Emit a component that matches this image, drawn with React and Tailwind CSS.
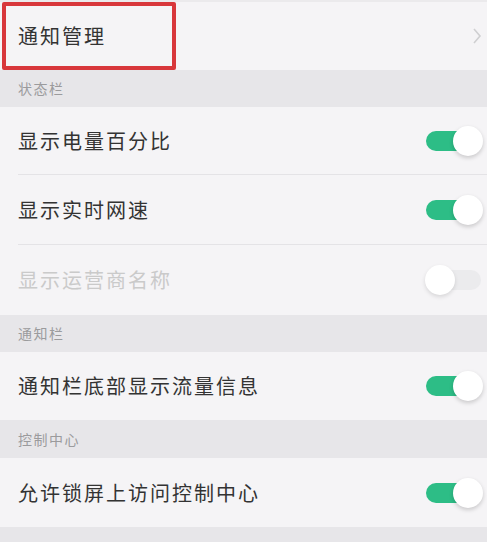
import React from "react";

const font = { fontFamily: '"Noto Sans CJK SC", "Noto Sans", sans-serif' };

const Toggle = ({ on }) => (
  <div className="relative w-[58px] h-[30px] flex items-center">
    <div
      className={
        on
          ? "ml-[1px] w-[48px] h-[20px] rounded-full bg-[#2dbd86]"
          : "ml-[10px] w-[46px] h-[20px] rounded-full bg-[#ebebed]"
      }
    />
    <div
      className={
        on
          ? "absolute right-0 top-0 w-[30px] h-[30px] rounded-full bg-white shadow-[0_2px_4px_rgba(0,0,0,0.18)]"
          : "absolute left-0 top-0 w-[30px] h-[30px] rounded-full bg-white shadow-[0_2px_4px_rgba(0,0,0,0.12)]"
      }
    />
  </div>
);

const Section = ({ title, h }) => (
  <div className={`${h} bg-[#e7e6e9] flex items-center pl-[18px]`}>
    <span className="text-[14px] tracking-[1.5px] text-[#9b9b9d]">{title}</span>
  </div>
);

const Row = ({ label, on, disabled, h, line }) => (
  <div className={`${h} bg-[#f5f4f6] flex`}>
    <div
      className={`flex-1 ml-[18px] pr-[4px] flex items-center justify-between ${
        line ? "border-b border-[#e4e3e6]" : ""
      }`}
    >
      <span
        className={`text-[20px] tracking-[2px] ${
          disabled ? "text-[#cacaca]" : "text-[#333333]"
        }`}
      >
        {label}
      </span>
      <Toggle on={on} />
    </div>
  </div>
);

const App = () => {
  return (
    <div className="w-[487px] h-[542px] overflow-hidden bg-[#f5f4f6]" style={font}>
      <div className="h-[70px] flex items-center justify-between border-t-2 border-[#ebeaec]">
        <div className="ml-[2px] w-[174px] h-[68px] border-4 rounded-[2px] border-[#d8373b] flex items-center pl-[12px]">
          <span className="text-[20px] tracking-[2px] text-[#333333]">通知管理</span>
        </div>
        <svg width="10" height="20" viewBox="0 0 10 20" className="mr-[5px]">
          <path d="M2 3 L8 10 L2 17" fill="none" stroke="#cfcfd1" strokeWidth="1.6" />
        </svg>
      </div>
      <Section title="状态栏" h="h-[37px]" />
      <Row label="显示电量百分比" on h="h-[68px]" line />
      <Row label="显示实时网速" on h="h-[70px]" line />
      <Row label="显示运营商名称" disabled h="h-[70px]" />
      <Section title="通知栏" h="h-[37px]" />
      <Row label="通知栏底部显示流量信息" on h="h-[68px]" />
      <Section title="控制中心" h="h-[38px]" />
      <Row label="允许锁屏上访问控制中心" on h="h-[69px]" />
      <div className="h-[20px] bg-[#e7e6e9]" />
    </div>
  );
};

export default App;
